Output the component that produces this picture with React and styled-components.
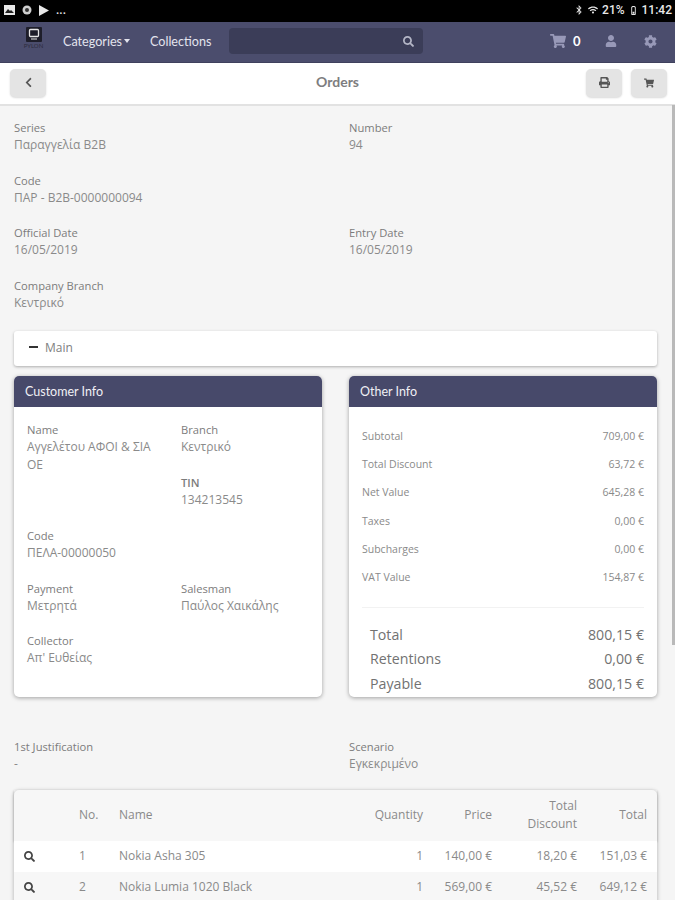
import React from "react";
import styled, { createGlobalStyle } from "styled-components";
import {
  FaBatteryQuarter,
  FaBluetoothB,
  FaCog,
  FaChevronLeft,
  FaPrint,
  FaSearch,
  FaShoppingCart,
  FaUser,
  FaWifi,
} from "react-icons/fa";

const GlobalStyle = createGlobalStyle`
  html, body {
    margin: 0;
    padding: 0;
    height: 900px;
    overflow: hidden;
    background: #f5f5f5;
  }
  * { box-sizing: border-box; }
`;

const Page = styled.div`
  position: relative;
  width: 675px;
  height: 900px;
  overflow: hidden;
  background: #f5f5f5;
  font-family: "Open Sans", sans-serif;
  color: #808080;
`;

const StatusBar = styled.div`
  height: 22px;
  background: #000;
  color: #e8e8e8;
  display: flex;
  align-items: center;
  justify-content: space-between;
  padding: 0 3px 2px 4px;
  font-family: "Roboto", sans-serif;
  font-size: 12px;
  font-weight: 500;
`;

const StatusGroup = styled.div`
  display: flex;
  align-items: center;
  gap: ${(p) => p.$gap || 5}px;
`;

const NavBar = styled.div`
  height: 41px;
  background: #4b4d6d;
  border-bottom: 1px solid #3f415d;
  display: flex;
  align-items: center;
  padding-bottom: 2px;
  font-family: "Lato", sans-serif;
  font-size: 12.6px;
  color: #e3e4ee;
`;

const Logo = styled.div`
  width: 63px;
  flex: none;
  align-self: flex-start;
  display: flex;
  flex-direction: column;
  align-items: center;
  padding-top: 5px;
  padding-left: 4px;
  color: #2b2c3d;
  font-size: 6px;
  line-height: 8px;
`;

const NavLink = styled.div`
  flex: none;
  display: flex;
  align-items: center;
  gap: 2px;
  width: ${(p) => p.$w}px;
`;

const Caret = styled.span`
  width: 0;
  height: 0;
  border-left: 3.5px solid transparent;
  border-right: 3.5px solid transparent;
  border-top: 4px solid #e3e4ee;
`;

const SearchBox = styled.div`
  width: 194px;
  height: 26px;
  flex: none;
  background: #3b3d58;
  border-radius: 4px;
  display: flex;
  align-items: center;
  justify-content: flex-end;
  padding-right: 9px;
  color: #b4b6c6;
  font-size: 11px;
`;

const NavIcons = styled.div`
  flex: 1;
  display: flex;
  align-items: center;
  padding-left: 127px;
  color: #9899b8;
  font-size: 14px;
`;

const CartCount = styled.span`
  color: #fff;
  font-weight: 700;
  font-size: 13px;
  margin-left: 7px;
  margin-right: 24px;
`;

const Toolbar = styled.div`
  height: 43px;
  background: #fff;
  border-bottom: 2px solid #e2e2e2;
  display: flex;
  align-items: center;
  justify-content: space-between;
  padding: 0 8px 2px 10px;
  position: relative;
`;

const ToolTitle = styled.div`
  position: absolute;
  left: 0;
  right: 0;
  top: 10px;
  text-align: center;
  font-family: "Lato", sans-serif;
  font-weight: 700;
  font-size: 14px;
  color: #7d7d80;
`;

const ToolButton = styled.div`
  width: 36px;
  height: 28px;
  border-radius: 5px;
  background: #e4e4e4;
  box-shadow: 0 1px 2px rgba(0, 0, 0, 0.15);
  color: #555;
  font-size: ${(p) => p.$size || 11}px;
  display: flex;
  align-items: center;
  justify-content: center;
`;

const ToolGroup = styled.div`
  display: flex;
  gap: 9px;
  z-index: 1;
`;

const Content = styled.div`
  padding: 13px 18px 0 14px;
`;

const FieldGrid = styled.div`
  display: grid;
  grid-template-columns: 335px 1fr;
  row-gap: 16.67px;
`;

const Field = styled.div`
  min-height: 36px;
`;

const Label = styled.div`
  color: #7c7c7c;
  font-size: 11.2px;
  line-height: 17px;
  font-weight: ${(p) => (p.$bold ? 600 : 400)};
`;

const Value = styled.div`
  color: #8a8a8a;
  font-size: 12px;
  line-height: 18px;
`;

const MainBar = styled.div`
  margin-top: 18px;
  height: 35px;
  background: #fff;
  border-radius: 3px;
  box-shadow: 0 1px 3px rgba(0, 0, 0, 0.3);
  display: flex;
  align-items: center;
  gap: 7px;
  padding: 0 0 2px 15px;
  font-size: 12px;
  color: #808080;
`;

const Dash = styled.span`
  width: 9px;
  height: 2px;
  background: #333;
`;

const Cards = styled.div`
  margin-top: 10px;
  display: grid;
  grid-template-columns: 308px 308px;
  column-gap: 27px;
`;

const Card = styled.div`
  height: 321px;
  background: #fff;
  border-radius: 5px;
  box-shadow: 0 1px 4px rgba(0, 0, 0, 0.35);
  overflow: hidden;
`;

const CardHeader = styled.div`
  height: 31px;
  background: #47496a;
  color: #f0f0f5;
  font-family: "Lato", sans-serif;
  font-size: 12.5px;
  line-height: 31px;
  padding-left: 11px;
`;

const CustomerGrid = styled.div`
  display: grid;
  grid-template-columns: 154px 1fr;
  padding: 14px 0 0 13px;
`;

const CustomerCell = styled.div`
  height: ${(p) => p.$h}px;
  padding-right: 16px;
`;

const TinGap = styled.div`
  height: 17.500px;
`;

const OtherBody = styled.div`
  padding: 15px 13px 0 13px;
`;

const Row = styled.div`
  height: 28.2px;
  display: flex;
  align-items: center;
  justify-content: space-between;
  font-size: 10.5px;
  color: #8a8a8a;
`;

const Divider = styled.div`
  height: 1px;
  background: #f2f2f2;
  margin-top: 16px;
  margin-bottom: 14px;
`;

const TotalRow = styled.div`
  height: 24.5px;
  display: flex;
  align-items: center;
  justify-content: space-between;
  padding-left: 8px;
  font-size: 14.2px;
  color: #727272;
`;

const JustGrid = styled(FieldGrid)`
  margin-top: 41px;
`;

const Table = styled.div`
  margin-top: 16px;
  background: #f7f7f7;
  border-radius: 5px 5px 0 0;
  box-shadow: 0 1px 4px rgba(0, 0, 0, 0.3);
`;

const TableRow = styled.div`
  display: grid;
  grid-template-columns: 65px 40px 230px 84px 69px 85px 1fr;
  align-items: center;
  height: ${(p) => (p.$head ? 51 : 31)}px;
  background: ${(p) => p.$bg || "transparent"};
  box-shadow: ${(p) => (p.$head ? "0 1px 2px rgba(0,0,0,.25)" : "none")};
  position: relative;
  line-height: 18px;
  color: #8a8a8a;
`;

const Cell = styled.div`
  text-align: ${(p) => (p.$right ? "right" : "left")};
  padding-right: ${(p) => (p.$right ? 10 : 0)}px;
  padding-left: ${(p) => (p.$icon ? 10 : 0)}px;
  color: ${(p) => (p.$icon ? "#444" : "inherit")};
  font-size: ${(p) => (p.$icon ? 11 : 12)}px;
  display: ${(p) => (p.$icon ? "flex" : "block")};
`;

const Scrollbar = styled.div`
  position: absolute;
  right: 0;
  top: 105px;
  width: 3px;
  height: 540px;
  background: #b9b9b9;
`;

const LogoIcon = () => (
  <svg width="16" height="15" viewBox="0 0 16 15">
    <rect width="16" height="15" rx="1" fill="#1e1e2a" />
    <rect x="3.500" y="2.500" width="9" height="7" rx="1" fill="none" stroke="#e6e6e6" strokeWidth="1.3" />
    <rect x="5" y="11.500" width="6" height="1" fill="#e6e6e6" />
  </svg>
);

const otherRows = [
  ["Subtotal", "709,00 €"],
  ["Total Discount", "63,72 €"],
  ["Net Value", "645,28 €"],
  ["Taxes", "0,00 €"],
  ["Subcharges", "0,00 €"],
  ["VAT Value", "154,87 €"],
];

const totals = [
  ["Total", "800,15 €"],
  ["Retentions", "0,00 €"],
  ["Payable", "800,15 €"],
];

const lines = [
  ["1", "Nokia Asha 305", "1", "140,00 €", "18,20 €", "151,03 €"],
  ["2", "Nokia Lumia 1020 Black", "1", "569,00 €", "45,52 €", "649,12 €"],
];

function Info({ label, value, bold }) {
  return (
    <Field>
      <Label $bold={bold}>{label}</Label>
      <Value>{value}</Value>
    </Field>
  );
}

export default function App() {
  return (
    <Page>
      <GlobalStyle />
      <StatusBar>
        <StatusGroup $gap={7}>
          <svg width="11" height="10" viewBox="0 0 11 10">
            <rect width="11" height="10" fill="#e8e8e8" />
            <path d="M1 8l3-4 2 2 1-1 3 3z" fill="#222" />
          </svg>
          <svg width="10" height="10" viewBox="0 0 10 10">
            <circle cx="5" cy="5" r="4.500" fill="#cfcfcf" />
            <circle cx="5" cy="5" r="2" fill="#333" />
          </svg>
          <svg width="10" height="11" viewBox="0 0 10 11">
            <path d="M0 0l10 5.500-10 5.500z" fill="#e8e8e8" />
          </svg>
          <span>...</span>
        </StatusGroup>
        <StatusGroup $gap={4}>
          <FaBluetoothB size={10} />
          <FaWifi size={10} />
          <span>21%</span>
          <FaBatteryQuarter size={9} style={{ transform: "rotate(-90deg)" }} />
          <span>11:42</span>
        </StatusGroup>
      </StatusBar>

      <NavBar>
        <Logo>
          <LogoIcon />
          <span>PYLON</span>
        </Logo>
        <NavLink $w={87}>
          Categories
          <Caret />
        </NavLink>
        <NavLink $w={79}>Collections</NavLink>
        <SearchBox>
          <FaSearch />
        </SearchBox>
        <NavIcons>
          <FaShoppingCart size={16} />
          <CartCount>0</CartCount>
          <FaUser size={12} style={{ marginRight: 27 }} />
          <FaCog size={13} />
        </NavIcons>
      </NavBar>

      <Toolbar>
        <ToolTitle>Orders</ToolTitle>
        <ToolButton>
          <FaChevronLeft />
        </ToolButton>
        <ToolGroup>
          <ToolButton>
            <FaPrint />
          </ToolButton>
          <ToolButton $size={10}>
            <FaShoppingCart />
          </ToolButton>
        </ToolGroup>
      </Toolbar>

      <Content>
        <FieldGrid>
          <Info label="Series" value="Παραγγελία B2B" />
          <Info label="Number" value="94" />
          <Info label="Code" value="ΠΑΡ - B2B-0000000094" />
          <div />
          <Info label="Official Date" value="16/05/2019" />
          <Info label="Entry Date" value="16/05/2019" />
          <Info label="Company Branch" value="Κεντρικό" />
        </FieldGrid>

        <MainBar>
          <Dash />
          Main
        </MainBar>

        <Cards>
          <Card>
            <CardHeader>Customer Info</CardHeader>
            <CustomerGrid>
              <CustomerCell $h={106}>
                <Info label="Name" value="Αγγελέτου ΑΦΟΙ & ΣΙΑ ΟΕ" />
              </CustomerCell>
              <CustomerCell $h={106}>
                <Info label="Branch" value="Κεντρικό" />
                <TinGap />
                <Info label="TIN" value="134213545" bold />
              </CustomerCell>
              <CustomerCell $h={53}>
                <Info label="Code" value="ΠΕΛΑ-00000050" />
              </CustomerCell>
              <CustomerCell $h={53} />
              <CustomerCell $h={52}>
                <Info label="Payment" value="Μετρητά" />
              </CustomerCell>
              <CustomerCell $h={52}>
                <Info label="Salesman" value="Παύλος Χαικάλης" />
              </CustomerCell>
              <CustomerCell $h={40}>
                <Info label="Collector" value="Απ' Ευθείας" />
              </CustomerCell>
            </CustomerGrid>
          </Card>

          <Card>
            <CardHeader>Other Info</CardHeader>
            <OtherBody>
              {otherRows.map(([name, amount]) => (
                <Row key={name}>
                  <span>{name}</span>
                  <span>{amount}</span>
                </Row>
              ))}
              <Divider />
              {totals.map(([name, amount]) => (
                <TotalRow key={name}>
                  <span>{name}</span>
                  <span>{amount}</span>
                </TotalRow>
              ))}
            </OtherBody>
          </Card>
        </Cards>

        <JustGrid>
          <Info label="1st Justification" value="-" />
          <Info label="Scenario" value="Εγκεκριμένο" />
        </JustGrid>

        <Table>
          <TableRow $head>
            <Cell />
            <Cell>No.</Cell>
            <Cell>Name</Cell>
            <Cell $right>Quantity</Cell>
            <Cell $right>Price</Cell>
            <Cell $right>
              Total
              <br />
              Discount
            </Cell>
            <Cell $right>Total</Cell>
          </TableRow>
          {lines.map((line, i) => (
            <TableRow key={line[0]} $bg={i % 2 === 0 ? "#fff" : "#f7f7f7"}>
              <Cell $icon>
                <FaSearch />
              </Cell>
              <Cell>{line[0]}</Cell>
              <Cell>{line[1]}</Cell>
              <Cell $right>{line[2]}</Cell>
              <Cell $right>{line[3]}</Cell>
              <Cell $right>{line[4]}</Cell>
              <Cell $right>{line[5]}</Cell>
            </TableRow>
          ))}
        </Table>
      </Content>
      <Scrollbar />
    </Page>
  );
}
